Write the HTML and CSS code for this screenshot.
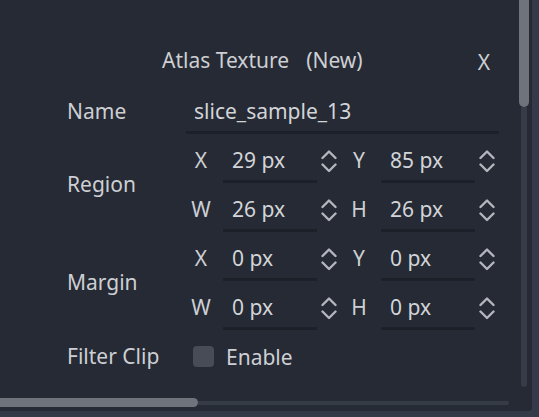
FILE: index.html
```html
<!DOCTYPE html>
<html>
<head>
<meta charset="utf-8">
<link rel="stylesheet" href="styles.css">
</head>
<body>
<div class="window">
  <div class="panel">
    <div class="main">
      <div class="content">
        <div class="header">
          <span class="title">Atlas Texture</span>
          <span class="tag">(New)</span>
          <span class="close">X</span>
        </div>
        <div class="props">
          <div class="prop">
            <div class="label">Name</div>
            <div class="field name-field">slice_sample_13</div>
          </div>
          <div class="prop">
            <div class="label">Region</div>
            <div class="pairs">
              <div class="pair-row">
                <div class="spin"><span class="axis">X</span><span class="field value">29 px</span><svg class="arrows" viewBox="0 0 16 24"><polyline points="1.5,9 8,2.5 14.5,9"/><polyline points="1.5,15.5 8,22 14.5,15.5"/></svg></div>
                <div class="spin"><span class="axis">Y</span><span class="field value">85 px</span><svg class="arrows" viewBox="0 0 16 24"><polyline points="1.5,9 8,2.5 14.5,9"/><polyline points="1.5,15.5 8,22 14.5,15.5"/></svg></div>
              </div>
              <div class="pair-row">
                <div class="spin"><span class="axis">W</span><span class="field value">26 px</span><svg class="arrows" viewBox="0 0 16 24"><polyline points="1.5,9 8,2.5 14.5,9"/><polyline points="1.5,15.5 8,22 14.5,15.5"/></svg></div>
                <div class="spin"><span class="axis">H</span><span class="field value">26 px</span><svg class="arrows" viewBox="0 0 16 24"><polyline points="1.5,9 8,2.5 14.5,9"/><polyline points="1.5,15.5 8,22 14.5,15.5"/></svg></div>
              </div>
            </div>
          </div>
          <div class="prop">
            <div class="label">Margin</div>
            <div class="pairs">
              <div class="pair-row">
                <div class="spin"><span class="axis">X</span><span class="field value">0 px</span><svg class="arrows" viewBox="0 0 16 24"><polyline points="1.5,9 8,2.5 14.5,9"/><polyline points="1.5,15.5 8,22 14.5,15.5"/></svg></div>
                <div class="spin"><span class="axis">Y</span><span class="field value">0 px</span><svg class="arrows" viewBox="0 0 16 24"><polyline points="1.5,9 8,2.5 14.5,9"/><polyline points="1.5,15.5 8,22 14.5,15.5"/></svg></div>
              </div>
              <div class="pair-row">
                <div class="spin"><span class="axis">W</span><span class="field value">0 px</span><svg class="arrows" viewBox="0 0 16 24"><polyline points="1.5,9 8,2.5 14.5,9"/><polyline points="1.5,15.5 8,22 14.5,15.5"/></svg></div>
                <div class="spin"><span class="axis">H</span><span class="field value">0 px</span><svg class="arrows" viewBox="0 0 16 24"><polyline points="1.5,9 8,2.5 14.5,9"/><polyline points="1.5,15.5 8,22 14.5,15.5"/></svg></div>
              </div>
            </div>
          </div>
          <div class="prop filter">
            <div class="label">Filter Clip</div>
            <div class="check"><span class="box"></span><span class="check-text">Enable</span></div>
          </div>
        </div>
      </div>
      <div class="vscroll">
        <div class="vthumb"></div>
        <div class="vtrack"></div>
      </div>
    </div>
    <div class="hscroll">
      <div class="hthumb"></div>
      <div class="htrack"></div>
    </div>
  </div>
</div>
</body>
</html>
```
FILE: styles.css
```css
html, body {
  margin: 0;
  padding: 0;
  background: #343a47;
}
body {
  font-family: "Noto Sans", "Open Sans", sans-serif;
  font-size: 21px;
  color: #cdcfd3;
}
.window {
  width: 539px;
  height: 417px;
  background: #343a47;
  display: flex;
  align-items: flex-start;
  overflow: hidden;
}
.panel {
  width: 532px;
  height: 411px;
  background: #252a35;
  border-bottom-right-radius: 4px;
  display: flex;
  flex-direction: column;
}
.main {
  height: 398px;
  display: flex;
}
.content {
  flex: 1;
  padding-left: 67px;
  padding-top: 40px;
  box-sizing: border-box;
}
.header {
  height: 40px;
  display: flex;
  align-items: center;
  margin-bottom: 11px;
  white-space: nowrap;
}
.title {
  margin-left: 95px;
}
.tag {
  margin-left: 17px;
}
.close {
  margin-left: auto;
  margin-right: 29px;
  padding-top: 3px;
}
.props {
  display: flex;
  flex-direction: column;
  gap: 6px;
}
.prop {
  display: flex;
  align-items: center;
}
.label {
  width: 119px;
  flex: none;
  white-space: nowrap;
  padding-bottom: 4px;
}
.field {
  height: 40px;
  border-bottom: 3px solid #1c2028;
  display: flex;
  align-items: center;
  white-space: nowrap;
  color: #d2d4d8;
}
.name-field {
  width: 313px;
  padding-left: 8px;
  box-sizing: border-box;
  height: 43px;
  padding-bottom: 1px;
}
.pairs {
  display: flex;
  flex-direction: column;
  gap: 6px;
}
.pair-row {
  display: flex;
  gap: 7px;
}
.spin {
  display: flex;
  align-items: center;
}
.axis {
  width: 30px;
  text-align: center;
  flex: none;
  padding-bottom: 4px;
}
.value {
  width: 94px;
  height: 43px;
  box-sizing: border-box;
  padding-left: 9px;
  margin-left: 7px;
}
.arrows {
  width: 16px;
  height: 24px;
  margin-left: 4px;
  margin-bottom: 2px;
  flex: none;
  fill: none;
  stroke: #b3b6bc;
  stroke-width: 2.4;
  stroke-linecap: round;
  stroke-linejoin: round;
}
.filter {
  height: 41px;
}
.filter .label {
  padding-bottom: 2px;
}
.check {
  display: flex;
  align-items: center;
}
.box {
  width: 21px;
  height: 21px;
  border-radius: 4px;
  background: #474c57;
  margin-left: 7px;
}
.check-text {
  margin-left: 12px;
}
.vscroll {
  width: 10px;
  margin-right: 3px;
  display: flex;
  flex-direction: column;
  align-items: center;
}
.vthumb {
  width: 10px;
  height: 107px;
  background: #6e737c;
  border-radius: 0 0 5px 5px;
}
.vtrack {
  width: 6px;
  height: 280px;
  background: #353b47;
  border-radius: 0 0 3px 3px;
}
.hscroll {
  height: 9px;
  display: flex;
  align-items: center;
}
.hthumb {
  width: 198px;
  height: 9px;
  background: #6e737c;
  border-radius: 0 5px 5px 0;
}
.htrack {
  width: 311px;
  height: 4px;
  background: #353b47;
  border-radius: 0 2px 2px 0;
}
```
